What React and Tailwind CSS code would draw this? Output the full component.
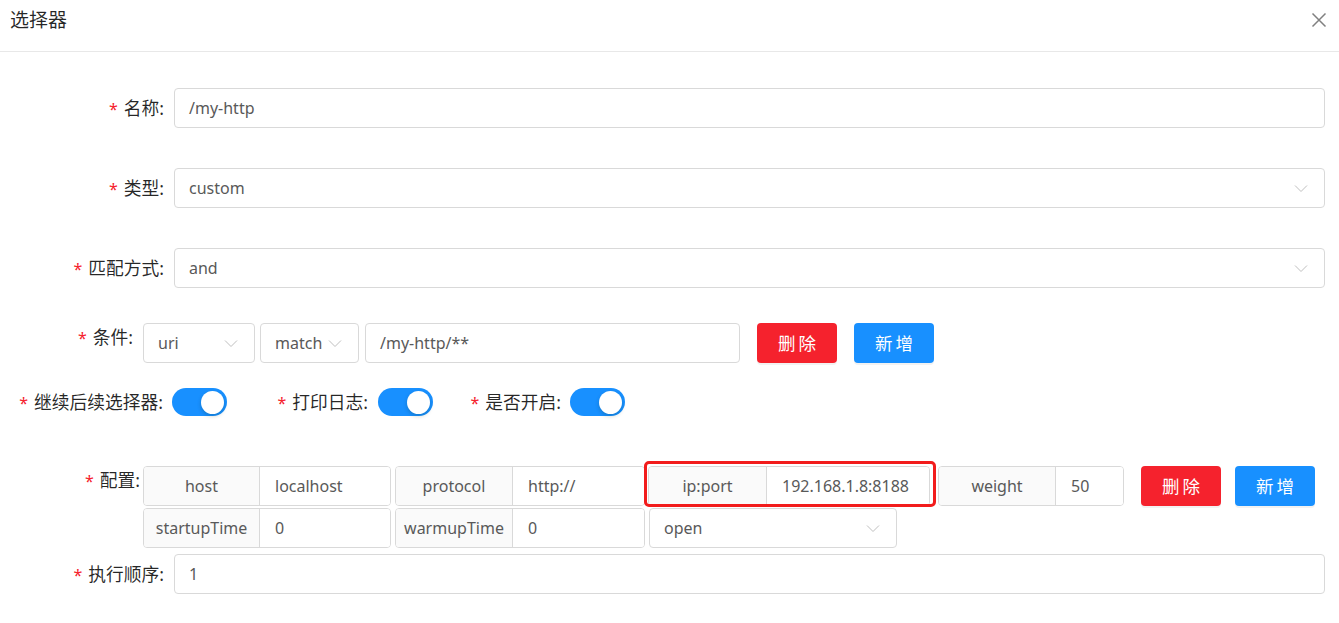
import React from "react";

const font = { fontFamily: '"Noto Sans", "Noto Sans CJK SC", sans-serif' };

function Star() {
  return <span className="text-[#f5222d] text-[16px] mr-[6px]">*</span>;
}

function Label({ children, className = "" }) {
  return (
    <div className={"shrink-0 text-right text-[17.75px] leading-[24px] text-[rgba(0,0,0,0.85)] whitespace-nowrap " + className}>
      <Star />
      {children}:
    </div>
  );
}

function Chevron() {
  return (
    <svg width="14" height="14" viewBox="0 0 14 14" className="shrink-0">
      <path d="M1 4.5l6 6 6-6" fill="none" stroke="#bfbfbf" strokeWidth="1" />
    </svg>
  );
}

function TextBox({ value, className = "" }) {
  return (
    <div className={"h-[40px] border border-[#d9d9d9] rounded-[4px] bg-white flex items-center pl-[14px] text-[16px] text-[#595959] " + className}>
      {value}
    </div>
  );
}

function SelectBox({ value, className = "" }) {
  return (
    <div className={"h-[40px] border border-[#d9d9d9] rounded-[4px] bg-white flex items-center justify-between pl-[14px] pr-[16px] text-[16px] text-[#595959] " + className}>
      <span>{value}</span>
      <Chevron />
    </div>
  );
}

// addon + input pair; outer border included in the given widths
function Group({ addon, value, addonW, inputW, className = "" }) {
  return (
    <div className={"h-[40px] flex border border-[#d9d9d9] rounded-[4px] overflow-hidden text-[16px] " + className}>
      <div className={"bg-[#fafafa] border-r border-[#d9d9d9] flex items-center justify-center text-[#595959] whitespace-nowrap " + addonW}>
        {addon}
      </div>
      <div className={"bg-white flex items-center pl-[15px] text-[#595959] " + inputW}>{value}</div>
    </div>
  );
}

function Btn({ color, children, className = "" }) {
  return (
    <div className={"h-[40px] w-[80px] rounded-[4px] flex items-center justify-center text-white text-[17.5px] tracking-[3px] pl-[3px] shadow-[0_2px_0_rgba(0,0,0,0.05)] " + color + " " + className}>
      {children}
    </div>
  );
}

function Switch() {
  return (
    <div className="w-[55px] h-[28px] rounded-full bg-[#1890ff] flex items-center justify-end pr-[3px] shrink-0">
      <div className="w-[23px] h-[23px] rounded-full bg-white shadow-[0_2px_4px_rgba(0,35,11,0.2)]" />
    </div>
  );
}

export default function App() {
  return (
    <div className="relative w-[1339px] h-[623px] bg-white overflow-hidden" style={font}>
      {/* header */}
      <div className="h-[52px] border-b border-[#e8e8e8] flex items-start justify-between pt-[7px] pl-[10px] pr-[12px]">
        <div className="text-[19px] leading-[26px] text-[rgba(0,0,0,0.85)]">选择器</div>
        <svg width="16" height="16" viewBox="0 0 16 16" className="mt-[5px]">
          <path d="M1.5 1.5l13 13M14.5 1.5l-13 13" stroke="#808080" strokeWidth="1.5" fill="none" />
        </svg>
      </div>

      <div className="pt-[36px]">
        <div className="flex items-center">
          <Label className="w-[174px] pr-[10px]">名称</Label>
          <TextBox value="/my-http" className="w-[1151px]" />
        </div>

        <div className="flex items-center mt-[40px]">
          <Label className="w-[174px] pr-[10px]">类型</Label>
          <SelectBox value="custom" className="w-[1151px]" />
        </div>

        <div className="flex items-center mt-[40px]">
          <Label className="w-[174px] pr-[10px]">匹配方式</Label>
          <SelectBox value="and" className="w-[1151px]" />
        </div>

        {/* 条件 */}
        <div className="flex items-start mt-[35px]">
          <Label className="w-[143px] pr-[10px] pt-[2px]">条件</Label>
          <SelectBox value="uri" className="w-[112px]" />
          <SelectBox value="match" className="w-[99px] ml-[5px] pr-[10px]" />
          <TextBox value="/my-http/**" className="w-[375px] ml-[6px]" />
          <Btn color="bg-[#f5222d]" className="ml-[17px]">删除</Btn>
          <Btn color="bg-[#1890ff]" className="ml-[17px]">新增</Btn>
        </div>

        {/* switches */}
        <div className="flex items-center mt-[25px] h-[28px]">
          <Label className="w-[163px]">继续后续选择器</Label>
          <div className="ml-[9px]"><Switch /></div>
          <Label className="w-[141px]">打印日志</Label>
          <div className="ml-[10px]"><Switch /></div>
          <Label className="w-[128px]">是否开启</Label>
          <div className="ml-[9px]"><Switch /></div>
        </div>

        {/* 配置 */}
        <div className="flex items-start mt-[50px]">
          <Label className="w-[143px] pr-[3px] pt-[2px]">配置</Label>
          <div className="flex flex-col">
            <div className="flex items-center h-[40px]">
              <Group addon="host" value="localhost" addonW="w-[116px]" inputW="w-[130px]" />
              <Group addon="protocol" value="http://" addonW="w-[117px]" inputW="w-[131px]" className="ml-[4px]" />
              <div className="relative ml-[3px]">
                <Group addon="ip:port" value="192.168.1.8:8188" addonW="w-[118px]" inputW="w-[162px]" />
                <div className="absolute left-[-4px] top-[-5px] w-[292px] h-[46px] border-[3px] border-[#f21c1c] rounded-[5px]" />
              </div>
              <Group addon="weight" value="50" addonW="w-[117px]" inputW="w-[67px]" className="ml-[8px]" />
              <Btn color="bg-[#f5222d]" className="ml-[17px] w-[79px] h-[39px]">删除</Btn>
              <Btn color="bg-[#1890ff]" className="ml-[14px] w-[79px] h-[39px]">新增</Btn>
            </div>
            <div className="flex items-end h-[40px] mt-[2px]">
              <Group addon="startupTime" value="0" addonW="w-[116px]" inputW="w-[130px]" />
              <Group addon="warmupTime" value="0" addonW="w-[117px]" inputW="w-[131px]" className="ml-[4px]" />
              <SelectBox value="open" className="w-[248px] ml-[4px] h-[38px] pr-[14px]" />
            </div>
          </div>
        </div>

        <div className="flex items-center mt-[6px]">
          <Label className="w-[174px] pr-[10px]">执行顺序</Label>
          <TextBox value="1" className="w-[1151px]" />
        </div>
      </div>
    </div>
  );
}
